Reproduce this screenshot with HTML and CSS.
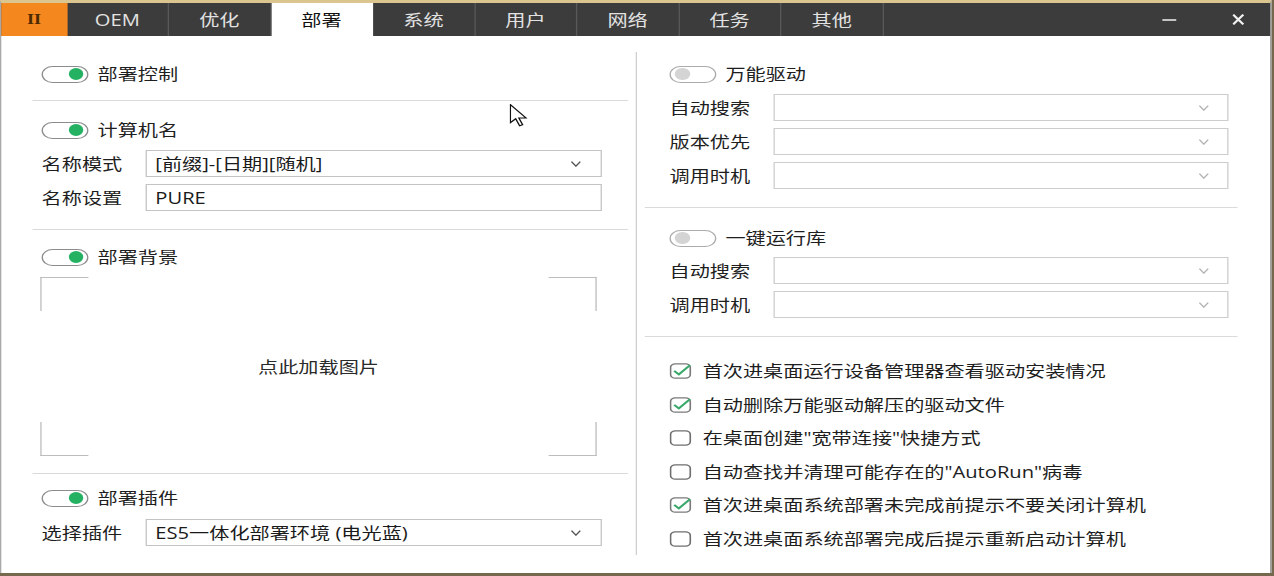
FILE: index.html
```html
<!DOCTYPE html>
<html lang="zh-CN">
<head>
<meta charset="utf-8">
<title>部署</title>
<link rel="stylesheet" href="styles.css">
</head>
<body>
<div class="page">
  <div class="window">
    <div class="tabbar">
      <div class="tab tab-logo">II</div>
      <div class="tab">OEM</div>
      <div class="tab">优化</div>
      <div class="tab active">部署</div>
      <div class="tab">系统</div>
      <div class="tab">用户</div>
      <div class="tab">网络</div>
      <div class="tab">任务</div>
      <div class="tab">其他</div>
      <div class="spacer"></div>
      <div class="winbtn"><svg width="11" height="4" viewBox="0 0 11 4"><line x1="0" y1="2" x2="11" y2="2" stroke="#f2f2f2" stroke-width="1.6"/></svg></div>
      <div class="winbtn"><svg width="9" height="11" viewBox="0 0 9 11"><path d="M0.6 0.6 L8.4 10.4 M8.4 0.6 L0.6 10.4" stroke="#f2f2f2" stroke-width="1.8" fill="none"/></svg></div>
    </div>

    <div class="content">
      <div class="col left">
        <section class="sec ls1">
          <div class="toggle-row"><span class="toggle on"></span><span class="tlabel">部署控制</span></div>
        </section>
        <section class="sec ls2">
          <div class="toggle-row"><span class="toggle on"></span><span class="tlabel">计算机名</span></div>
          <div class="field"><span class="label">名称模式</span><div class="select"><span>[前缀]-[日期][随机]</span><svg class="chev" width="8" height="6" viewBox="0 0 8 6"><polyline points="0.6,0.6 4,5.2 7.4,0.6" fill="none" stroke="#555" stroke-width="1.1"/></svg></div></div>
          <div class="field"><span class="label">名称设置</span><div class="select"><span>PURE</span></div></div>
        </section>
        <section class="sec ls3">
          <div class="toggle-row"><span class="toggle on"></span><span class="tlabel">部署背景</span></div>
          <div class="imgbox">点此加载图片</div>
        </section>
        <section class="sec last ls4">
          <div class="toggle-row"><span class="toggle on"></span><span class="tlabel">部署插件</span></div>
          <div class="field"><span class="label">选择插件</span><div class="select"><span>ES5一体化部署环境 (电光蓝)</span><svg class="chev" width="8" height="6" viewBox="0 0 8 6"><polyline points="0.6,0.6 4,5.2 7.4,0.6" fill="none" stroke="#555" stroke-width="1.1"/></svg></div></div>
        </section>
      </div>

      <div class="divider"></div>

      <div class="col right">
        <section class="sec rs1">
          <div class="toggle-row"><span class="toggle off"></span><span class="tlabel">万能驱动</span></div>
          <div class="field"><span class="label">自动搜索</span><div class="select dim"><span></span><svg class="chev" width="8" height="6" viewBox="0 0 8 6"><polyline points="0.6,0.6 4,5.2 7.4,0.6" fill="none" stroke="#b4b4b4" stroke-width="1.1"/></svg></div></div>
          <div class="field"><span class="label">版本优先</span><div class="select dim"><span></span><svg class="chev" width="8" height="6" viewBox="0 0 8 6"><polyline points="0.6,0.6 4,5.2 7.4,0.6" fill="none" stroke="#b4b4b4" stroke-width="1.1"/></svg></div></div>
          <div class="field"><span class="label">调用时机</span><div class="select dim"><span></span><svg class="chev" width="8" height="6" viewBox="0 0 8 6"><polyline points="0.6,0.6 4,5.2 7.4,0.6" fill="none" stroke="#b4b4b4" stroke-width="1.1"/></svg></div></div>
        </section>
        <section class="sec rs2">
          <div class="toggle-row"><span class="toggle off"></span><span class="tlabel">一键运行库</span></div>
          <div class="field"><span class="label">自动搜索</span><div class="select dim"><span></span><svg class="chev" width="8" height="6" viewBox="0 0 8 6"><polyline points="0.6,0.6 4,5.2 7.4,0.6" fill="none" stroke="#b4b4b4" stroke-width="1.1"/></svg></div></div>
          <div class="field"><span class="label">调用时机</span><div class="select dim"><span></span><svg class="chev" width="8" height="6" viewBox="0 0 8 6"><polyline points="0.6,0.6 4,5.2 7.4,0.6" fill="none" stroke="#b4b4b4" stroke-width="1.1"/></svg></div></div>
        </section>
        <section class="sec last checks">
          <div class="check"><svg class="cb" width="17" height="16" viewBox="0 0 17 16"><rect x="0.8" y="0.8" width="15.2" height="14.4" rx="3.6" fill="none" stroke="#7a7a7a" stroke-width="1.3"/><path d="M3.6 7.8 L7.2 11.4 L15.8 2.2" fill="none" stroke="#3aa86b" stroke-width="1.8"/></svg><span>首次进桌面运行设备管理器查看驱动安装情况</span></div>
          <div class="check"><svg class="cb" width="17" height="16" viewBox="0 0 17 16"><rect x="0.8" y="0.8" width="15.2" height="14.4" rx="3.6" fill="none" stroke="#7a7a7a" stroke-width="1.3"/><path d="M3.6 7.8 L7.2 11.4 L15.8 2.2" fill="none" stroke="#3aa86b" stroke-width="1.8"/></svg><span>自动删除万能驱动解压的驱动文件</span></div>
          <div class="check"><svg class="cb" width="17" height="16" viewBox="0 0 17 16"><rect x="0.8" y="0.8" width="15.2" height="14.4" rx="3.6" fill="none" stroke="#6e6e6e" stroke-width="1.3"/></svg><span>在桌面创建"宽带连接"快捷方式</span></div>
          <div class="check"><svg class="cb" width="17" height="16" viewBox="0 0 17 16"><rect x="0.8" y="0.8" width="15.2" height="14.4" rx="3.6" fill="none" stroke="#6e6e6e" stroke-width="1.3"/></svg><span>自动查找并清理可能存在的"AutoRun"病毒</span></div>
          <div class="check"><svg class="cb" width="17" height="16" viewBox="0 0 17 16"><rect x="0.8" y="0.8" width="15.2" height="14.4" rx="3.6" fill="none" stroke="#7a7a7a" stroke-width="1.3"/><path d="M3.6 7.8 L7.2 11.4 L15.8 2.2" fill="none" stroke="#3aa86b" stroke-width="1.8"/></svg><span>首次进桌面系统部署未完成前提示不要关闭计算机</span></div>
          <div class="check"><svg class="cb" width="17" height="16" viewBox="0 0 17 16"><rect x="0.8" y="0.8" width="15.2" height="14.4" rx="3.6" fill="none" stroke="#6e6e6e" stroke-width="1.3"/></svg><span>首次进桌面系统部署完成后提示重新启动计算机</span></div>
        </section>
      </div>
    </div>

    <svg class="cursor" width="14" height="23" viewBox="0 0 12 19" preserveAspectRatio="none"><path d="M0.5 0.5 L0.5 15.5 L4 12.2 L6.6 18 L8.6 17.1 L6.1 11.5 L10.8 11.5 Z" fill="#fff" stroke="#111" stroke-width="0.9" stroke-linejoin="miter"/></svg>
  </div>
</div>
</body>
</html>
```

FILE: styles.css
```css
* { box-sizing: border-box; }

html, body {
  margin: 0;
  padding: 0;
}

body {
  width: 1274px;
  height: 576px;
  overflow: hidden;
  background: #76674f;
  font-family: "Open Sans", "Noto Sans CJK SC", sans-serif;
  font-size: 15.5px;
  line-height: 20px;
  color: #1e1e1e;
}

/* the reference is horizontally stretched by 1.3 */
.page {
  width: 980px;
  height: 576px;
  transform: scaleX(1.3);
  transform-origin: 0 0;
}

.window {
  position: relative;
  width: 978px;
  height: 573px;
  background: #fff;
  border-top: 3px solid #dcc690;
  border-left: 1px solid #a8a8a8;
  border-right: 1px solid #9a9a9a;
}

/* ---------- tab bar ---------- */
.tabbar {
  display: flex;
  height: 33px;
  background: #3c3c3c;
}

.tab {
  flex: none;
  width: 78.5px;
  display: flex;
  align-items: center;
  justify-content: center;
  border-right: 1px solid #595959;
  color: #e2e2e2;
}

.tab-logo {
  width: 50.5px;
  border-right: none;
  background: #f5871f;
  color: #4b2a00;
  font-family: "Liberation Serif", serif;
  font-weight: bold;
  font-size: 14px;
}

.tab.active {
  background: #fff;
  color: #111;
  border-right-color: transparent;
}

.spacer { flex: 1; }

.winbtn {
  flex: none;
  width: 40px;
  display: flex;
  align-items: center;
  justify-content: center;
}

.winbtn + .winbtn { margin-left: 13px; }
.winbtn:last-child { margin-right: 5px; }

/* ---------- content ---------- */
.content {
  display: flex;
  height: 537px;
  padding-left: 24px;
}

.col { flex: none; }
.col.left { width: 458px; }
.col.right { width: 456px; }

.divider {
  flex: none;
  width: 1px;
  height: 503px;
  margin: 16px 6px 0;
  background: #cfcfcf;
}

.sec { border-bottom: 1px solid #dadada; }
.sec.last { border-bottom: none; }

.left .sec { padding-left: 7px; padding-right: 20px; }
.right .sec { padding-left: 19px; padding-right: 7px; }

.ls1 { padding-top: 30px; padding-bottom: 18px; }
.ls2 { padding-top: 21px; padding-bottom: 18px; }
.ls3 { padding-top: 19px; padding-bottom: 17px; }
.ls4 { padding-top: 16px; }
.ls4 .toggle-row { margin-bottom: 13px; }

.rs1 { padding-top: 30px; padding-bottom: 18px; }
.rs2 { padding-top: 22px; padding-bottom: 18px; }
.rs2 .toggle-row { margin-bottom: 11px; }

/* toggle */
.toggle-row {
  display: flex;
  align-items: center;
  height: 16px;
  margin-bottom: 12px;
}

.ls1 .toggle-row { margin-bottom: 0; }

.toggle {
  flex: none;
  display: flex;
  align-items: center;
  width: 36px;
  height: 17px;
  padding: 0 3px;
  border: 1.5px solid #8c8c8c;
  border-radius: 9px;
}

.toggle::after {
  content: "";
  width: 11.5px;
  height: 12px;
  border-radius: 50%;
}

.toggle.on { justify-content: flex-end; }
.toggle.on::after { background: #24b262; }

.toggle.off { border-color: #ababab; }
.toggle.off::after { background: #d4d4d4; }

.tlabel { margin-left: 7px; }

/* fields */
.field {
  display: flex;
  align-items: center;
}

.field + .field { margin-top: 7px; }

.label {
  flex: none;
  width: 79.5px;
}

.select {
  flex: 1;
  height: 27px;
  display: flex;
  align-items: center;
  justify-content: space-between;
  padding: 0 15px 0 7px;
  border: 1px solid #c4c4c4;
  color: #1a1a1a;
}

.select.dim {
  border-color: #cdcdcd;
  padding-right: 14px;
}

.chev { flex: none; }

/* image placeholder with corner brackets */
.imgbox {
  height: 179px;
  margin: 12px 4px 0 -1px;
  display: flex;
  align-items: center;
  justify-content: center;
  color: #2a2a2a;
  background:
    linear-gradient(#bdbdbd, #bdbdbd) left top / 37px 1px no-repeat,
    linear-gradient(#bdbdbd, #bdbdbd) left top / 1px 34px no-repeat,
    linear-gradient(#bdbdbd, #bdbdbd) right top / 37px 1px no-repeat,
    linear-gradient(#bdbdbd, #bdbdbd) right top / 1px 34px no-repeat,
    linear-gradient(#bdbdbd, #bdbdbd) left bottom / 37px 1px no-repeat,
    linear-gradient(#bdbdbd, #bdbdbd) left bottom / 1px 34px no-repeat,
    linear-gradient(#bdbdbd, #bdbdbd) right bottom / 37px 1px no-repeat,
    linear-gradient(#bdbdbd, #bdbdbd) right bottom / 1px 34px no-repeat;
}

/* checkboxes */
.checks {
  display: flex;
  flex-direction: column;
  gap: 13.6px;
  padding-top: 24px;
}

.check {
  display: flex;
  align-items: center;
  height: 20px;
}

.cb { flex: none; margin-right: 8.5px; }

/* mouse pointer overlay */
.cursor {
  position: absolute;
  left: 390.5px;
  top: 101px;
}
```
